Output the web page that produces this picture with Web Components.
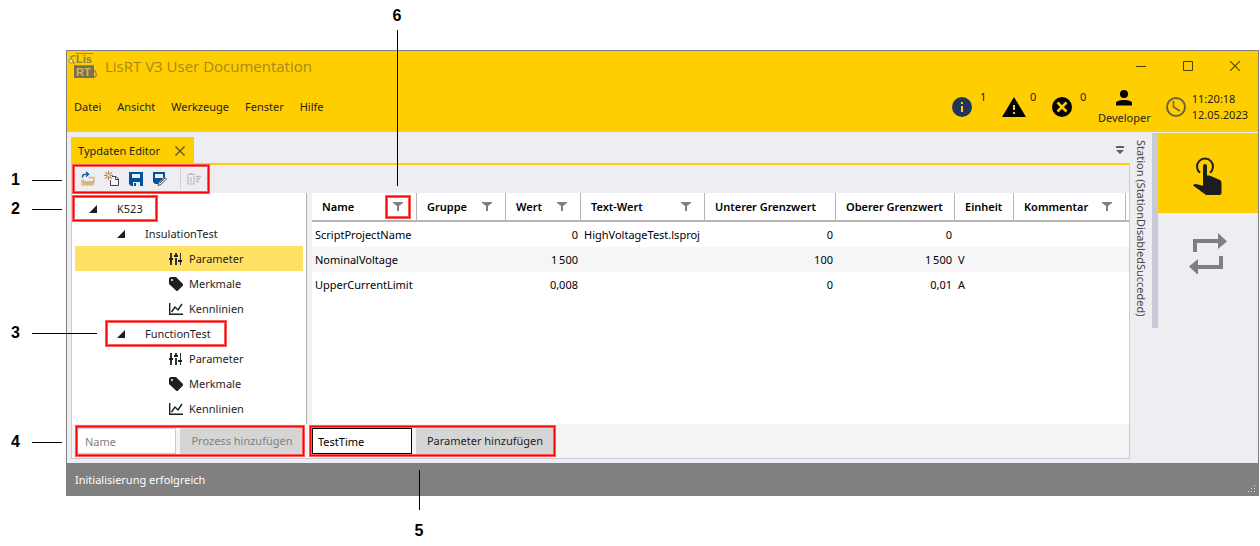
<!DOCTYPE html>
<html lang="de">
<head>
<meta charset="utf-8">
<title>LisRT V3 User Documentation</title>
<style>
  html { background: #fff; }
  body { margin: 0; font: 11px/16px "Noto Sans", "Open Sans", sans-serif; color: #1e1e1e; }
</style>
</head>
<body>
<annotated-figure>
  <app-window>
    <title-bar slot="head"></title-bar>
    <menu-strip slot="head"></menu-strip>
    <doc-editor slot="main"></doc-editor>
    <station-dock slot="main"></station-dock>
    <status-line slot="foot">Initialisierung erfolgreich</status-line>
  </app-window>
</annotated-figure>

<script>
const RESET = `*{box-sizing:border-box} button,input{font:inherit;color:inherit;margin:0;padding:0;border:0;border-radius:0;background:none;outline:0} button{cursor:pointer} a{color:inherit;text-decoration:none} svg{display:block}`;
function define(name, css, html, ready) {
  const tpl = document.createElement('template');
  tpl.innerHTML = `<style>${RESET}${css}</style>${html}`;
  customElements.define(name, class extends HTMLElement {
    constructor() {
      super();
      this.attachShadow({ mode: 'open' }).append(tpl.content.cloneNode(true));
      if (ready) ready.call(this, this.shadowRoot);
    }
  });
}

const ICONS = {
  funnel: [10, 10, '<path d="M0 0h10v1L6 4v5H4V4L0 1z" fill="#7f7f7f"/>'],
  caret: [8, 8, '<path d="M8 0v8H0z" fill="#1e1e1e"/>'],
  params: [14, 14, '<path d="M1 1h2v5H1zM1 8h2v5H1zM6 1h2v2H6zM6 6h2v7H6zM11 1h1v7h-1zM11 10h1v3h-1z" fill="#333"/><path d="M0 6h4v2H0zM5 3h4v2H5zM9 8h4v2H9z" fill="#1e1e1e"/>'],
  tag: [14, 14, '<path fill-rule="evenodd" d="M0 1.500L1.500 0H7l7 7v1.500L8.500 14H7.500L0 7zM3 2a1 1 0 1 0 0 2 1 1 0 0 0 0-2z" fill="#1e1e1e"/>'],
  chart: [14, 14, '<path d="M.700 1v11.300H14M2.500 10l3.500-5 3 3 4-6" fill="none" stroke="#1e1e1e" stroke-width="1.400"/>'],
  open: [16, 16, '<path d="M1.500 9.500h2M8.500 6.500h5.500v4" stroke="#dcb67a" stroke-width="1.500" fill="none"/><path d="M4.500 10H15l-1.500 4.500H1.500V9h2z" fill="#dcb67a"/><path d="M2.500 6.500C2 3.500 4 3 8 3.200M6 1l2.500 2.300L6 5.500" fill="none" stroke="#00539c" stroke-width="1.400"/>'],
  create: [16, 16, '<path d="M8 5.500h4l2.500 2.500v6.500h-8V9" fill="#f6f6f6" stroke="#424242"/><path d="M11.500 5v3.500H15" fill="none" stroke="#424242"/><path d="M4.500 0v9M0 4.500h9M1.300 1.300l6.400 6.400M7.700 1.300L1.300 7.700" stroke="#c27d1a" stroke-width="1.100"/><circle cx="4.500" cy="4.500" r="1.300" fill="#f0eff1"/>'],
  save: [16, 16, '<path fill-rule="evenodd" d="M1 1h14v14h-3v-4H5v4H3l-2-2zM4 3v4h8V3z" fill="#00539c"/><path d="M6 12h2v3H6z" fill="#00539c"/>'],
  saveas: [16, 16, '<path fill-rule="evenodd" d="M1 1h12v6L7 13H3l-2-2zM3 3v4h8V3z" fill="#00539c"/><path d="M6 14.500l1-3L12.500 6 14.500 8 9 13.500z" fill="#eee" stroke="#555"/><path d="M8 12l5-5" stroke="#555"/>'],
  clear: [16, 16, '<path d="M1 3.500h8M3.500 2.500h3M2 4.500v8.500h6V4.500M5 6v5.500" fill="none" stroke="#bcbcbf" stroke-width="1.200"/><path d="M10 5.500h5M10 8h4M10 10.500h3" stroke="#bcbcbf" stroke-width="1.300"/>'],
  info: [20, 20, '<circle cx="10" cy="10" r="10" fill="#20355c"/><path d="M9 5h2v2H9zM9 9h2v6H9z" fill="#fc0"/>'],
  warn: [24, 20, '<path d="M12 0l12 20H0z" fill="#000"/><path d="M11 8h2v5h-2zM11 15h2v2h-2z" fill="#fc0"/>'],
  error: [20, 20, '<circle cx="10" cy="10" r="10" fill="#000"/><path d="M5.500 5.500l9 9M14.500 5.500l-9 9" stroke="#fc0" stroke-width="2.600"/>'],
  user: [16, 16, '<circle cx="8" cy="4" r="4" fill="#000"/><path d="M0 15.500V13c0-2 4-3 8-3s8 1 8 3v2.500z" fill="#000"/>'],
  clock: [20, 20, '<circle cx="10" cy="10" r="9" fill="none" stroke="#6b6240" stroke-width="2"/><path d="M7.500 4v6l6.500 4" fill="none" stroke="#6b6240" stroke-width="1.500"/>'],
  min: [10, 10, '<path d="M0 5.500h10" stroke="#4d4000"/>'],
  max: [10, 10, '<path d="M.500.500h9v9h-9z" fill="none" stroke="#4d4000"/>'],
  close: [10, 10, '<path d="M0 0l10 10M10 0L0 10" stroke="#4d4000" stroke-width="1.100"/>'],
  tabclose: [10, 10, '<path d="M.500.500l9 9M9.500.500l-9 9" stroke="#5c5330" stroke-width="1.300"/>'],
  overflow: [8, 8, '<path d="M0 0h8v2H0zM0 4h8L4 8z" fill="#5f5f64"/>'],
  touch: [32, 40, '<path d="M8 15.800A8 8 0 1 1 18 15.800" fill="none" stroke="#1e1e1e" stroke-width="2"/><path d="M11 9a2 2 0 0 1 4 0v9.500h2.500L28 23q1.500 1 1.500 3v10q0 2-2 2H14L1 28.500l2-1.800 8 2z" fill="#1e1e1e"/>'],
  loop: [38, 42, '<path d="M4 20V7h25V1l9 8.500L29 17v-6H8v9zM34 24v13H9v6l-9-8.500L9 27v6h21v-9z" fill="#7f7f7f"/>'],
  logo: [29, 26, '<path d="M6 12h20v13H6z" fill="#77705a"/><path d="M8 .500h17M8 12.500h17" stroke="#99872c"/><g font-family="Liberation Sans,Arial,sans-serif" font-weight="700" font-size="11"><text x="8" y="10" fill="#8f8143">Lis</text><text x="8" y="23" fill="#d9b843">RT</text></g><path d="M8 3C5 2 2 4 3 6c1 2 3 2 3 5M26 17q3 3 2 6l-3 2" stroke="#8a8050" fill="none" stroke-width="1.200"/><circle cx="3" cy="8" r="2" fill="#f6eebc" stroke="#a89440"/>']
};
customElements.define('ui-icon', class extends HTMLElement {
  static observedAttributes = ['name'];
  constructor() { super(); this.attachShadow({ mode: 'open' }); }
  attributeChangedCallback() {
    const [w, h, body] = ICONS[this.getAttribute('name')];
    this.shadowRoot.innerHTML = `<style>:host{display:block;flex:none}svg{display:block}</style><svg width="${w}" height="${h}" viewBox="0 0 ${w} ${h}" aria-hidden="true">${body}</svg>`;
  }
});

/* red frame around whatever is slotted into it */
define('mark-box', `:host{display:block;position:relative}
  i{position:absolute;inset:var(--grow,0);border:1px solid #f00;box-shadow:0 0 0 1px #ff5a5a,inset 0 0 0 1px #ff5a5a;pointer-events:none;z-index:2}`,
  `<slot></slot><i></i>`);

define('annotated-figure', `:host{display:block;position:relative;padding:50px 1px 50px 66px}
  span{position:absolute;font:bold 16px/20px "Liberation Sans",Arial,sans-serif;color:#000;z-index:3;display:flex;align-items:center}
  span::after{content:"";background:#000}
  .h{left:11px;width:51px;justify-content:space-between}
  .h::after{width:30px;height:1px}
  .v{width:10px;flex-direction:column}
  .v::after{width:1px}
  .n1{top:170px}.n2{top:199px}.n3{top:323px;width:86px}.n3::after{width:65px}.n4{top:432px}
  .n5{left:414px;top:470px;flex-direction:column-reverse;gap:11px}.n5::after{height:40px}
  .n6{left:392px;top:6px;gap:4px}.n6::after{height:156px}`,
  `<slot></slot><span class="h n1">1</span><span class="h n2">2</span><span class="h n3">3</span><span class="h n4">4</span><span class="v n5">5</span><span class="v n6">6</span>`);

define('app-window', `:host{display:block;border:solid #808080;border-width:1px 1px 0}
  header{background:#ffce00}
  main{display:flex;background:#eeedf2}`,
  `<header><slot name="head"></slot></header><main><slot name="main"></slot></main><footer><slot name="foot"></slot></footer>`);

define('title-bar', `:host{display:flex;align-items:center;height:30px;padding:0 18px 0 1px}
  h1{margin:0 auto 0 8px;font:15px/20px "Open Sans","Noto Sans",sans-serif;color:#a48a1d}
  nav{display:flex;gap:37px}`,
  `<ui-icon name="logo"></ui-icon><h1>LisRT V3 User Documentation</h1>
   <nav><button aria-label="Minimieren"><ui-icon name="min"></ui-icon></button><button aria-label="Maximieren"><ui-icon name="max"></ui-icon></button><button aria-label="Schließen"><ui-icon name="close"></ui-icon></button></nav>`);

define('menu-strip', `:host{display:flex;align-items:center;height:51px;padding:0 10px 0 7px}
  nav{display:flex;gap:16px;margin-right:auto}
  .n{display:flex;align-items:center;width:50px;gap:8px;height:20px}
  .n b{font-weight:400;align-self:flex-start;margin-top:-8px}
  .n ui-icon[name=warn]{margin-right:-4px}
  .u{display:flex;flex-direction:column;align-items:center;gap:4px;margin:2px 15px 0 -4px}
  .c{display:flex;align-items:center;gap:6px}`,
  `<nav><a href="#">Datei</a><a href="#">Ansicht</a><a href="#">Werkzeuge</a><a href="#">Fenster</a><a href="#">Hilfe</a></nav>
   <div class="n"><ui-icon name="info"></ui-icon><b>1</b></div>
   <div class="n"><ui-icon name="warn"></ui-icon><b>0</b></div>
   <div class="n"><ui-icon name="error"></ui-icon><b>0</b></div>
   <div class="u"><ui-icon name="user"></ui-icon>Developer</div>
   <div class="c"><ui-icon name="clock"></ui-icon><div>11:20:18<br>12.05.2023</div></div>`);

define('tool-strip', `:host{display:flex;height:28px}
  mark-box{--grow:0 1px}
  div{display:flex;align-items:center;height:28px;width:138px;padding-left:8px;gap:8px}
  hr{width:1px;height:20px;margin:0 -3px 0 4px;border:0;background:#ccceda}`,
  `<mark-box><div><button aria-label="Öffnen"><ui-icon name="open"></ui-icon></button><button aria-label="Neu"><ui-icon name="create"></ui-icon></button><button aria-label="Speichern"><ui-icon name="save"></ui-icon></button><button aria-label="Speichern unter"><ui-icon name="saveas"></ui-icon></button><hr><button disabled aria-label="Löschen"><ui-icon name="clear"></ui-icon></button></div></mark-box>`);

define('tree-row', `:host{display:flex;align-items:center;height:25px;gap:6px}
  :host([selected]){background:#ffe166}
  :host([level="1"]){padding-left:17px;gap:20px}
  :host([level="2"]){padding-left:42px;gap:20px}
  :host([level="3"]){padding-left:94px}
  ui-icon{width:14px}
  :host([level="1"]) ui-icon,:host([level="2"]) ui-icon{width:8px}`,
  `<ui-icon></ui-icon><slot></slot>`, function (root) {
    root.querySelector('ui-icon').setAttribute('name', this.getAttribute('icon') || 'caret');
  });

define('type-tree', `:host{display:block;padding:3px 3px;background:#fff}
  mark-box{--grow:0 1px}
  .a{width:86px;margin-left:-3px}
  .b{width:122px;margin-left:30px}.b tree-row{padding-left:12px}`,
  `<mark-box class="a"><tree-row level="1">K523</tree-row></mark-box>
   <tree-row level="2">InsulationTest</tree-row>
   <tree-row level="3" icon="params" selected>Parameter</tree-row>
   <tree-row level="3" icon="tag">Merkmale</tree-row>
   <tree-row level="3" icon="chart">Kennlinien</tree-row>
   <mark-box class="b"><tree-row level="2">FunctionTest</tree-row></mark-box>
   <tree-row level="3" icon="params">Parameter</tree-row>
   <tree-row level="3" icon="tag">Merkmale</tree-row>
   <tree-row level="3" icon="chart">Kennlinien</tree-row>`);

define('param-table', `:host{display:block;background:#fff;min-width:0}
  table{width:100%;table-layout:fixed;border-collapse:separate;border-spacing:0}
  th{height:29px;padding:0;border-bottom:2px solid #b5b5b5;text-align:left;font-weight:600;color:#000;white-space:nowrap}
  th>div{display:flex;align-items:center;justify-content:space-between;height:27px;padding:0 13px 0 10px;border-right:1px solid #b5b5b5}
  th:last-child>div{border:0;padding:0}
  td{height:25px;padding:0 3px;white-space:nowrap;color:#000}
  tr:nth-child(even) td{background:#f6f6f6}
  td.r{text-align:right}
  mark-box{--grow:-6px -7px}`,
  `<table><colgroup><col style="width:105px"><col style="width:89px"><col style="width:75px"><col style="width:124px"><col style="width:131px"><col style="width:119px"><col style="width:59px"><col style="width:112px"><col></colgroup>
  <thead><tr><th><div>Name<mark-box><ui-icon name="funnel"></ui-icon></mark-box></div></th><th><div>Gruppe<ui-icon name="funnel"></ui-icon></div></th><th><div>Wert<ui-icon name="funnel"></ui-icon></div></th><th><div>Text-Wert<ui-icon name="funnel"></ui-icon></div></th><th><div>Unterer Grenzwert</div></th><th><div>Oberer Grenzwert</div></th><th><div>Einheit</div></th><th><div>Kommentar<ui-icon name="funnel"></ui-icon></div></th><th><div></div></th></tr></thead>
  <tbody>
  <tr><td>ScriptProjectName</td><td></td><td class="r">0</td><td>HighVoltageTest.lsproj</td><td class="r">0</td><td class="r">0</td><td></td><td></td><td></td></tr>
  <tr><td>NominalVoltage</td><td></td><td class="r">1&#8201;500</td><td></td><td class="r">100</td><td class="r">1&#8201;500</td><td>V</td><td></td><td></td></tr>
  <tr><td>UpperCurrentLimit</td><td></td><td class="r">0,008</td><td></td><td class="r">0</td><td class="r">0,01</td><td>A</td><td></td><td></td></tr>
  </tbody></table>`);

define('add-form', `:host{display:block;padding:4px 0}
  mark-box{--grow:-2px 0;width:max-content}
  form{display:flex;gap:4px}
  input{width:100px;height:26px;padding:0 8px;border:1px solid #c9cad9;background:#fff}
  input::placeholder{color:#808080;opacity:1}
  button{width:124px;height:26px;background:#d5d5d5}
  button:disabled{color:#808080}
  :host([active]) input{border-color:#000;padding:0 5px;color:#000}
  :host([active]) mark-box{--grow:-2px -1px -2px -2px}
  :host([active]) button{width:138px;color:#1e1e1e}`,
  `<mark-box><form><input><button type="button"></button></form></mark-box>`, function (root) {
    const input = root.querySelector('input'), button = root.querySelector('button');
    input.placeholder = input.ariaLabel = 'Name';
    input.value = this.getAttribute('value') || '';
    button.textContent = this.getAttribute('action');
    button.disabled = !this.hasAttribute('active');
  });

define('doc-editor', `:host{display:block;flex:1;min-width:0;padding:5px 0 4px 4px}
  .tabs{display:flex;align-items:center;justify-content:space-between;height:26px;padding-right:6px}
  .tab{display:flex;align-items:center;gap:15px;height:26px;padding:2px 9px 0 7px;background:#ffce00}
  .frame{border:1px solid #c9cad9;border-top:2px solid #ffce00}
  .grid,.foot{display:grid;grid-template-columns:234px 6px minmax(0,1fr)}
  .split{border-left:1px solid #b0b0b0;background:#f0f0f0}
  .foot{background:#f4f4f4}
  .foot add-form:first-child{padding-left:4px}`,
  `<div class="tabs"><div class="tab">Typdaten Editor<button aria-label="Tab schließen"><ui-icon name="tabclose"></ui-icon></button></div><button aria-label="Weitere Tabs"><ui-icon name="overflow"></ui-icon></button></div>
   <div class="frame"><tool-strip></tool-strip>
   <div class="grid"><type-tree></type-tree><div class="split"></div><param-table></param-table></div>
   <div class="foot"><add-form action="Prozess hinzufügen"></add-form><i></i><add-form action="Parameter hinzufügen" value="TestTime" active></add-form></div></div>`);

define('station-dock', `:host{display:flex;align-items:flex-start;flex:none;padding-top:1px}
  .label{width:22px;height:195px;padding-top:7px;writing-mode:vertical-rl;line-height:22px;white-space:nowrap;color:#444}
  .bar{width:6px;height:195px;background:#c9cad9}
  nav{width:100px}
  button{display:flex;width:100px;height:80px;align-items:center;justify-content:center}
  .on{background:#ffce00;padding-top:8px}`,
  `<div class="label">Station (StationDisabledSucceded)</div><div class="bar"></div>
   <nav><button class="on" aria-label="Handbetrieb"><ui-icon name="touch"></ui-icon></button><button aria-label="Automatik"><ui-icon name="loop"></ui-icon></button></nav>`);

define('status-line', `:host{display:flex;align-items:center;justify-content:space-between;height:33px;margin:0 -1px;padding:0 3px 0 9px;background:#808080;color:#fff}
  svg{align-self:flex-end;margin-bottom:3px}`,
  `<slot></slot><svg width="8" height="8" viewBox="0 0 8 8"><path d="M6 0h1v1H6zM3 3h1v1H3zM6 3h1v1H6zM0 6h1v1H0zM3 6h1v1H3zM6 6h1v1H6z" fill="#ddd"/></svg>`);
</script>
</body>
</html>
